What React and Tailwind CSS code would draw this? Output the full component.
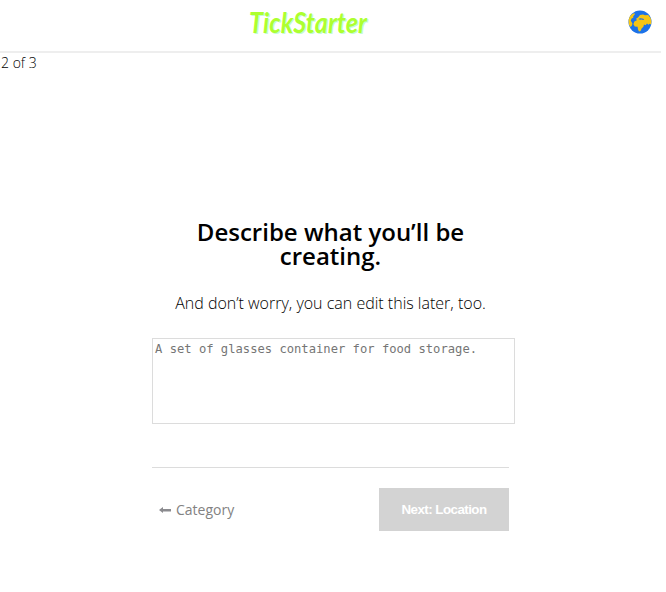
function Globe() {
  return (
    <svg viewBox="0 0 24 24" className="h-6 w-6" aria-label="Profile">
      <circle cx="12" cy="12" r="11.5" fill="#1c72e8" />
      <path
        fill="#f6c514"
        d="M3.6 4.4 6.4 3l.4 1.6-1.6 1.6.2 1.4-2 1.2-.6 2 1.6 2.4-.4 2.4-1.6 1.4L.9 14.4.6 10l1.2-3.6Z"
      />
      <path
        fill="#f6c514"
        d="M10 7.4 12 5l3-.6 2 .8 3.2-.2 2.4 3 .8 3.6-.4 3-1.4-.8-1.2 1-1.4-1.2-1.4 1.6-1.6-.6-.6 2.2-1.8 1.6-1 2.6-1.6.6-1-2-.4-2.8-2.8-.4-1.4-2.2 1-2.8 2.4-1.2-.6-1.6Z"
      />
      <path fill="#1c72e8" d="m10.4 9 1.8-.8 2 .2 1.8.6-.4 1-2.2-.4-1.4.2Z" />
    </svg>
  );
}

function Header() {
  return (
    <header className="relative flex h-[53px] border-b-2 border-[#eeeeee] pl-[243px]">
      <svg className="h-[51px] w-[140px]" viewBox="0 0 140 51" aria-label="TickStarter">
        <text
          x="6"
          y="33"
          textLength="118"
          lengthAdjust="spacingAndGlyphs"
          className="fill-[#adff2f] font-['Lato','Liberation_Sans',sans-serif] text-[28px] font-bold italic [text-shadow:1px_1px_0_#c5fbd5]"
        >
          TickStarter
        </text>
      </svg>
      <div className="absolute top-[10px] right-[9px]">
        <Globe />
      </div>
    </header>
  );
}

export default function App() {
  return (
    <div className="h-[592px] w-[666px] overflow-hidden bg-white pr-[5px] font-['Open_Sans','Noto_Sans',sans-serif] text-black">
      <Header />
      <p className="h-[19px] pl-px text-[14px] leading-[19px] font-light">2 of 3</p>
      <main className="mx-auto mt-[148px] w-[357px]">
        <h1 className="text-center text-2xl leading-6 font-semibold">
          Describe what you’ll be
          <br />
          creating.
        </h1>
        <p className="mt-[23px] text-center text-base leading-6 font-light whitespace-nowrap">
          And don’t worry, you can edit this later, too.
        </p>
        <textarea
          className="mt-[23px] block h-[86px] w-[363px] resize-none border border-[#dcdcdc] p-[2px] font-['DejaVu_Sans_Mono',monospace] text-[12.17px] leading-[16px] outline-none placeholder:text-[#757575]"
          placeholder="A set of glasses container for food storage."
        />
        <div className="mt-[43px] flex items-center justify-between border-t border-[#dcdcdc] pt-5">
          <button className="flex items-center gap-[5px] pl-[7px] text-sm text-[#828282]">
            <svg viewBox="0 0 12 8" className="h-2 w-3 fill-[#8b8b8f]">
              <path d="M0 4 4 1v2h8v2.4H4V7Z" />
            </svg>
            Category
          </button>
          <button className="h-[43px] w-[130px] bg-[#d3d3d3] font-['Liberation_Sans',Arial,sans-serif] text-[13.33px] font-bold tracking-[-0.53px] text-white">
            Next: Location
          </button>
        </div>
      </main>
    </div>
  );
}
